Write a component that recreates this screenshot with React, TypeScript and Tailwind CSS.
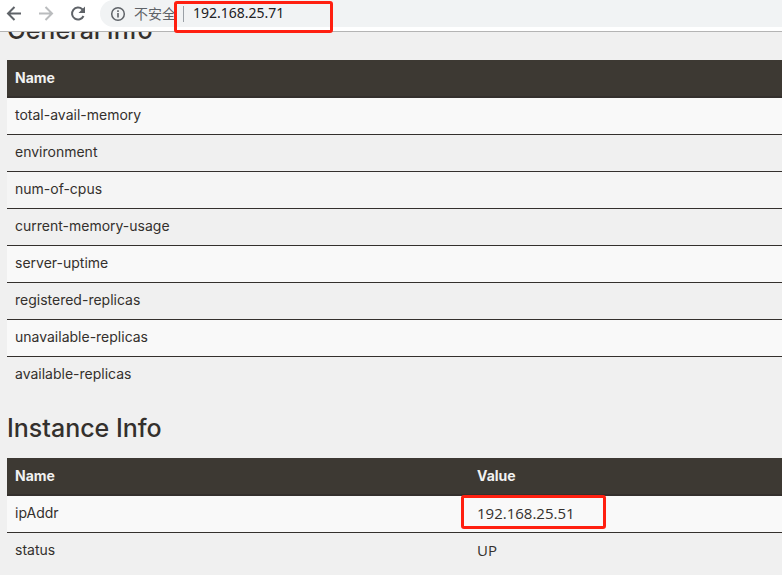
import React from 'react';

interface InfoTableProps {
    title: string;
    columns: string[];
    rows: string[][];
    activeRow?: number;
    highlighted?: string;
}

const generalInfo = [
    ['total-avail-memory'],
    ['environment'],
    ['num-of-cpus'],
    ['current-memory-usage'],
    ['server-uptime'],
    ['registered-replicas'],
    ['unavailable-replicas'],
    ['available-replicas'],
];

const instanceInfo = [
    ['ipAddr', '192.168.25.51'],
    ['status', 'UP'],
];

const rowColor = (index: number, active: boolean) => {
    if (active) return 'bg-[#f5f5f5]';
    return index % 2 === 0 ? 'bg-[#f9f9f9]' : 'bg-[#f0f0f0]';
};

const InfoTable: React.FC<InfoTableProps> = ({ title, columns, rows, activeRow, highlighted }) => (
    <section className="mb-5">
        <h2 className="mb-4 text-[25px] leading-7 font-medium">{title}</h2>
        <table className="w-full table-fixed border-separate border-spacing-0 text-left text-[14px] leading-5">
            <thead>
                <tr className="bg-[#3d3933] text-[#f1f1f1]">
                    {columns.map((column, i) => (
                        <th
                            key={column}
                            className={`h-[38px] border-b-2 border-[#34302d] px-2 font-bold ${
                                i === 0 && columns.length > 1 ? 'w-[462px]' : ''
                            }`}
                        >
                            {column}
                        </th>
                    ))}
                </tr>
            </thead>
            <tbody>
                {rows.map((row, i) => (
                    <tr key={row[0]} className={rowColor(i, i === activeRow)}>
                        {row.map((cell, j) => (
                            <td
                                key={cell}
                                className={`relative h-[37px] border-b px-2 pb-0.5 ${
                                    i < rows.length - 1 ? 'border-[#34302d]' : 'border-transparent'
                                } ${j > 0 ? "font-['Open_Sans',sans-serif] text-[15px]" : ''}`}
                            >
                                {cell}
                                {cell === highlighted && (
                                    <span className="absolute -top-px -left-2 h-[34px] w-[145px] rounded-[3px] border-3 border-[#ff1f10]" />
                                )}
                            </td>
                        ))}
                    </tr>
                ))}
            </tbody>
        </table>
    </section>
);

const BrowserBar = () => (
    <header className="relative z-10 flex h-8 items-start border-b border-[#b4b4b4] bg-white pl-1 text-[#5f6368]">
        <nav className="flex h-[27px] w-24 shrink-0 items-center gap-3">
            <button type="button" aria-label="Back">
                <svg className="size-5" viewBox="0 0 20 20" fill="none" stroke="currentColor" strokeWidth="2">
                    <path d="M17 9.5H4M10.5 3 4 9.5l6.5 6.5" />
                </svg>
            </button>
            <button type="button" aria-label="Forward" className="text-[#babcbe]">
                <svg className="size-5" viewBox="0 0 20 20" fill="none" stroke="currentColor" strokeWidth="2">
                    <path d="M3 9.5h13M9.5 3l6.5 6.5L9.5 16" />
                </svg>
            </button>
            <button type="button" aria-label="Reload">
                <svg className="size-5" viewBox="0 0 20 20" fill="none" stroke="currentColor" strokeWidth="2">
                    <path d="M15.5 12a6 6 0 1 1-1.2-6.7L16 7" />
                    <path d="M17 2.5V9h-6.5z" fill="currentColor" stroke="none" />
                </svg>
            </button>
        </nav>
        <div className="relative flex h-[27px] min-w-0 flex-1 items-center rounded-l-full bg-[#f1f3f4] pl-2.5">
            <svg className="size-4 shrink-0" viewBox="0 0 16 16" fill="none" stroke="currentColor">
                <circle cx="8" cy="8" r="6.3" strokeWidth="1.5" />
                <path d="M8 7v4.5M8 4.3v1.6" strokeWidth="1.6" />
            </svg>
            <span className="ml-2 w-[42px] shrink-0 pb-0.5 font-['Noto_Sans_CJK_SC',sans-serif] text-[14px] leading-5 whitespace-nowrap">
                不安全
            </span>
            <span className="ml-[7px] h-4 w-px shrink-0 bg-[#9aa0a6]" />
            <input
                type="text"
                aria-label="Address"
                defaultValue="192.168.25.71"
                className="ml-[9px] min-w-0 flex-1 bg-transparent pb-0.5 font-['Noto_Sans',sans-serif] text-[14px] leading-5 text-[#202124] outline-none"
            />
            <span className="pointer-events-none absolute top-px left-[74px] h-8 w-[159px] rounded-[3px] border-3 border-[#ff1f10]" />
        </div>
    </header>
);

const App = () => (
    <div className="min-h-screen overflow-hidden bg-[#f0f0f0] font-['Inter',sans-serif] text-[#34302d]">
        <BrowserBar />
        <main className="-mt-4 pl-[7px]">
            <InfoTable title="General Info" columns={['Name']} rows={generalInfo} activeRow={2} />
            <InfoTable
                title="Instance Info"
                columns={['Name', 'Value']}
                rows={instanceInfo}
                highlighted="192.168.25.51"
            />
        </main>
    </div>
);

export default App;
